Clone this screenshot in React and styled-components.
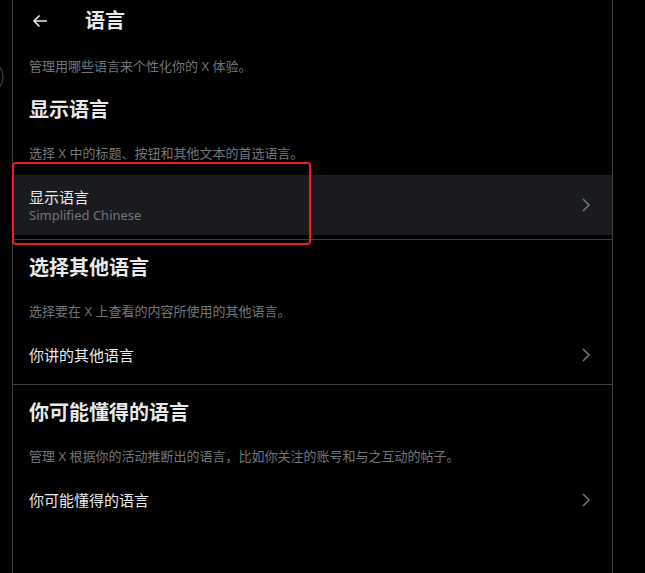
import React from "react";
import styled, { createGlobalStyle } from "styled-components";

const GlobalStyle = createGlobalStyle`
  html, body {
    margin: 0;
    padding: 0;
    background: #000;
  }
  body {
    font-family: "Noto Sans", "Noto Sans CJK SC", sans-serif;
    color: #e7e9ea;
  }
`;

const sections = [
  {
    title: "选择其他语言",
    desc: "选择要在 X 上查看的内容所使用的其他语言。",
    row: "你讲的其他语言",
  },
  {
    title: "你可能懂得的语言",
    desc: "管理 X 根据你的活动推断出的语言，比如你关注的账号和与之互动的帖子。",
    row: "你可能懂得的语言",
  },
];

const Chevron = () => (
  <ChevronIcon viewBox="0 0 10 16" aria-hidden="true">
    <path d="M2 2 L8 8 L2 14" fill="none" stroke="currentColor" strokeWidth="1.6" />
  </ChevronIcon>
);

const App = () => {
  return (
    <Page>
      <GlobalStyle />
      <Gutter>
        <svg width="12" height="573" aria-hidden="true">
          <circle cx="-14" cy="77" r="17" fill="none" stroke="#4a4d50" strokeWidth="1" />
        </svg>
      </Gutter>

      <Column>
        <Header>
          <BackButton aria-label="返回">
            <svg width="16" height="14" viewBox="0 0 16 14">
              <path
                d="M15 7 H2 M7.5 1.5 L2 7 L7.5 12.5"
                fill="none"
                stroke="#e7e9ea"
                strokeWidth="1.6"
              />
            </svg>
          </BackButton>
          <PageTitle>语言</PageTitle>
        </Header>

        <Desc $top={16}>管理用哪些语言来个性化你的 X 体验。</Desc>

        <Heading>显示语言</Heading>
        <Desc>选择 X 中的标题、按钮和其他文本的首选语言。</Desc>
        <Row $active>
          <RowText>
            <RowLabel>显示语言</RowLabel>
            <RowSub>Simplified Chinese</RowSub>
          </RowText>
          <Chevron />
        </Row>
        <Divider />

        {sections.map((s, i) => (
          <React.Fragment key={s.title}>
            <Heading>{s.title}</Heading>
            <Desc>{s.desc}</Desc>
            <Row>
              <RowLabel>{s.row}</RowLabel>
              <Chevron />
            </Row>
            {i < sections.length - 1 && <Divider />}
          </React.Fragment>
        ))}
      </Column>

      <Side />
      <Highlight />
    </Page>
  );
};

export default App;

/* ================== STYLES ================== */
const Page = styled.div`
  position: relative;
  display: flex;
  min-height: 573px;
  background: #000;
  overflow: hidden;
`;

const Gutter = styled.div`
  flex: 0 0 12px;
  overflow: hidden;
  line-height: 0;
`;

const Column = styled.div`
  flex: 0 0 599px;
  border-left: 1px solid #3a3d41;
  border-right: 1px solid #3a3d41;
  min-height: 573px;
`;

const Side = styled.div`
  flex: 1;
  background: #000;
`;

const Header = styled.div`
  height: 42px;
  display: flex;
  align-items: center;
  padding-left: 19px;
`;

const BackButton = styled.div`
  width: 16px;
  height: 14px;
  display: flex;
  align-items: center;
  margin-right: 37px;
`;

const PageTitle = styled.h2`
  margin: 0;
  font-size: 20px;
  line-height: 24px;
  font-weight: 700;
  color: #e7e9ea;
`;

const Heading = styled.h3`
  margin: 0;
  padding: 16px 16px 23px;
  font-size: 20px;
  line-height: 24px;
  font-weight: 700;
  color: #e7e9ea;
`;

const Desc = styled.p`
  margin: 0;
  padding: ${(p) => p.$top || 0}px 16px 8px;
  font-size: 13px;
  line-height: 16px;
  color: #71767b;
`;

const Row = styled.div`
  display: flex;
  align-items: center;
  justify-content: space-between;
  padding: ${(p) => (p.$active ? "12px 16px" : "18px 16px 19px")};
  margin: ${(p) => (p.$active ? "6px 0 4px" : "0")};
  background: ${(p) => (p.$active ? "#1a1b1f" : "transparent")};
  cursor: pointer;
`;

const RowText = styled.div`
  display: flex;
  flex-direction: column;
`;

const RowLabel = styled.span`
  font-size: 15px;
  line-height: 20px;
  color: #e7e9ea;
`;

const RowSub = styled.span`
  font-size: 13px;
  line-height: 16px;
  color: #71767b;
`;

const ChevronIcon = styled.svg`
  width: 10px;
  height: 16px;
  margin-right: 5px;
  color: #71767b;
`;

const Divider = styled.div`
  height: 1px;
  background: #3a3d41;
`;

const Highlight = styled.div`
  position: absolute;
  left: 12px;
  top: 162px;
  width: 295px;
  height: 79px;
  border: 2px solid #f01d1d;
  border-radius: 4px;
  pointer-events: none;
`;
